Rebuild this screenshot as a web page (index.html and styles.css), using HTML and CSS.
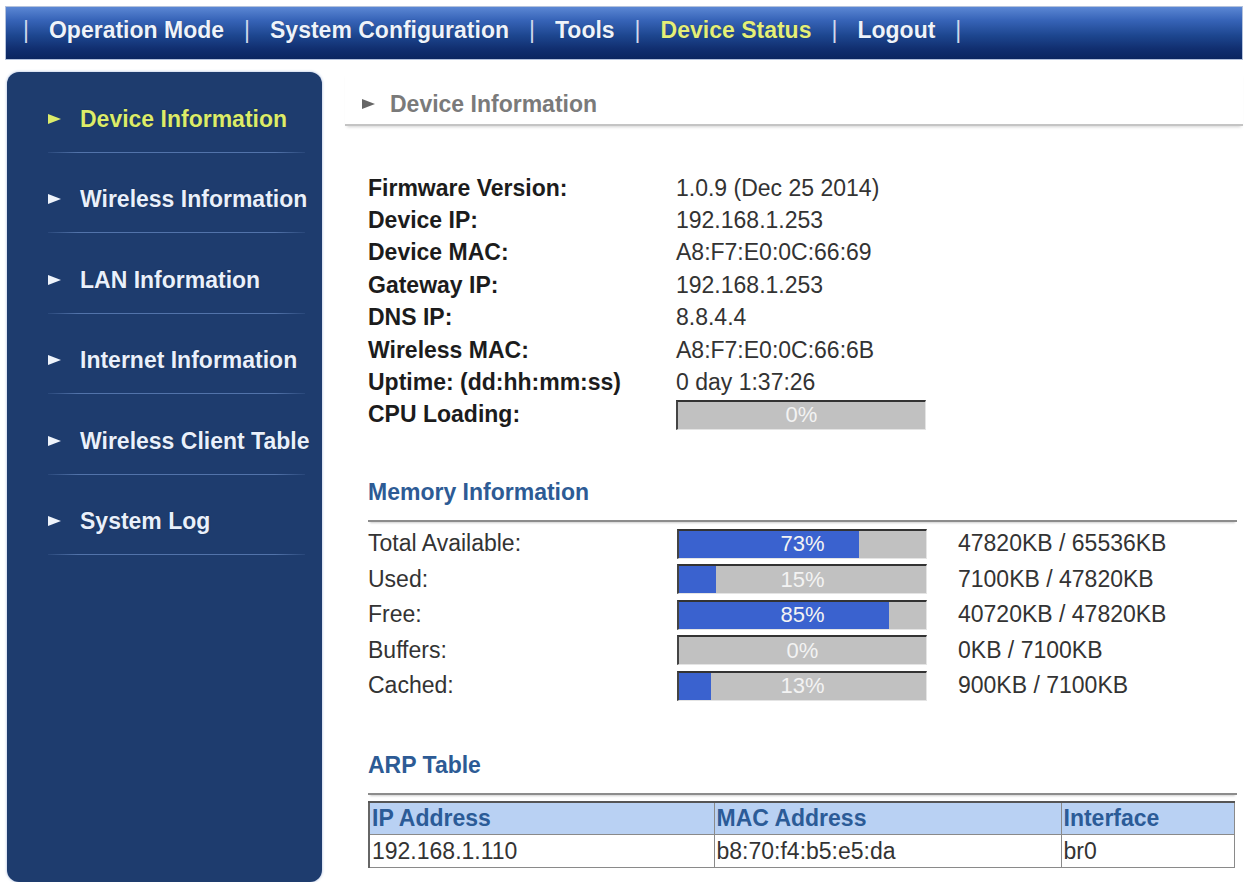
FILE: index.html
```html
<!DOCTYPE html>
<html lang="en">
<head>
  <meta charset="UTF-8" />
  <meta name="viewport" content="width=device-width, initial-scale=1.0">
  <title>Device Status</title>
  <link rel="stylesheet" href="styles.css">
</head>
<body>

  <!-- top menu -->
  <div class="topnav">
    <span class="sep">|</span>
    <a href="#">Operation Mode</a>
    <span class="sep">|</span>
    <a href="#">System Configuration</a>
    <span class="sep">|</span>
    <a href="#">Tools</a>
    <span class="sep">|</span>
    <a href="#" class="current">Device Status</a>
    <span class="sep">|</span>
    <a href="#">Logout</a>
    <span class="sep">|</span>
  </div>

  <div class="main">
    <div class="sidebar">
      <a href="#" class="menu-item active"><span class="arrow"></span>Device Information</a>
      <a href="#" class="menu-item"><span class="arrow"></span>Wireless Information</a>
      <a href="#" class="menu-item"><span class="arrow"></span>LAN Information</a>
      <a href="#" class="menu-item"><span class="arrow"></span>Internet Information</a>
      <a href="#" class="menu-item"><span class="arrow"></span>Wireless Client Table</a>
      <a href="#" class="menu-item"><span class="arrow"></span>System Log</a>
    </div>

    <div class="content">
      <div class="page-title"><span class="arrow"></span>Device Information</div>

      <div class="info-grid">
        <div class="label">Firmware Version:</div><div class="value">1.0.9 (Dec 25 2014)</div>
        <div class="label">Device IP:</div><div class="value">192.168.1.253</div>
        <div class="label">Device MAC:</div><div class="value">A8:F7:E0:0C:66:69</div>
        <div class="label">Gateway IP:</div><div class="value">192.168.1.253</div>
        <div class="label">DNS IP:</div><div class="value">8.8.4.4</div>
        <div class="label">Wireless MAC:</div><div class="value">A8:F7:E0:0C:66:6B</div>
        <div class="label">Uptime: (dd:hh:mm:ss)</div><div class="value">0 day 1:37:26</div>
        <div class="label">CPU Loading:</div>
        <div class="value"><div class="bar" style="--p: 0%">0%</div></div>
      </div>

      <div class="section-title">Memory Information</div>
      <div class="mem-grid">
        <div class="mem-label">Total Available:</div>
        <div class="bar" style="--p: 73%">73%</div>
        <div class="mem-value">47820KB / 65536KB</div>

        <div class="mem-label">Used:</div>
        <div class="bar" style="--p: 15%">15%</div>
        <div class="mem-value">7100KB / 47820KB</div>

        <div class="mem-label">Free:</div>
        <div class="bar" style="--p: 85%">85%</div>
        <div class="mem-value">40720KB / 47820KB</div>

        <div class="mem-label">Buffers:</div>
        <div class="bar" style="--p: 0%">0%</div>
        <div class="mem-value">0KB / 7100KB</div>

        <div class="mem-label">Cached:</div>
        <div class="bar" style="--p: 13%">13%</div>
        <div class="mem-value">900KB / 7100KB</div>
      </div>

      <div class="section-title">ARP Table</div>
      <table class="arp">
        <tr>
          <th class="col-ip">IP Address</th>
          <th class="col-mac">MAC Address</th>
          <th>Interface</th>
        </tr>
        <tr>
          <td>192.168.1.110</td>
          <td>b8:70:f4:b5:e5:da</td>
          <td>br0</td>
        </tr>
      </table>
    </div>
  </div>

</body>
</html>
```

FILE: styles.css
```css
* {
  box-sizing: border-box;
}

body {
  margin: 0;
  font-family: "Liberation Sans", Arial, sans-serif;
  font-size: 23px;
  color: #222;
  background: #fff;
  overflow: hidden;
}

a {
  text-decoration: none;
}

/* top menu bar */
.topnav {
  display: flex;
  align-items: center;
  height: 54px;
  margin: 6px 5px 0 5px;
  padding: 0 0 5px 17px;
  border: 1px solid #b4c2dc;
  background: linear-gradient(to bottom, #5b87d4 0%, #3764b8 25%, #1d468f 55%, #112f70 80%, #0b2660 100%);
}

.topnav a {
  color: #eef3fb;
  font-weight: bold;
  text-shadow: 0 0 1px rgba(0, 0, 0, 0.4);
}

.topnav a.current {
  color: #e4ef78;
}

.topnav .sep {
  color: #cfd9ec;
  margin: 0 20px;
}

.topnav .sep:first-child {
  margin-left: 0;
}

.main {
  display: flex;
  margin-top: 12px;
}

/* left menu */
.sidebar {
  width: 315px;
  height: 810px;
  margin-left: 7px;
  padding-right: 17px;
  background: #1e3c6e;
  border-radius: 12px;
  box-shadow: 0 0 3px #9fb4da;
}

.menu-item {
  display: flex;
  align-items: center;
  margin-left: 41px;
  padding-top: 31.5px;
  padding-bottom: 18px;
  line-height: 30px;
  color: #e9f0fc;
  font-weight: bold;
  white-space: nowrap;
  border-bottom: 1px solid;
  border-image: linear-gradient(to right, rgba(80, 112, 165, 0.2), #5273aa 12%, #5273aa 88%, rgba(80, 112, 165, 0.2)) 1;
  text-shadow: 0 0 1px rgba(0, 0, 0, 0.5);
}

.menu-item.active {
  color: #dcec6a;
}

.menu-item .arrow {
  width: 0;
  height: 0;
  margin-right: 19px;
  border-left: 13px solid #eef3fb;
  border-top: 5.5px solid transparent;
  border-bottom: 5.5px solid transparent;
}

.menu-item.active .arrow {
  border-left-color: #dcec6a;
}

/* right side */
.content {
  flex: 1;
  margin-left: 23px;
  margin-right: 5px;
}

.page-title {
  display: flex;
  align-items: center;
  padding: 18px 0 6px 17px;
  line-height: 28px;
  color: #7a7a7a;
  font-weight: bold;
  border-bottom: 2px solid #c4c4c4;
  box-shadow: 0 3px 3px -2px rgba(0, 0, 0, 0.18);
}

.page-title .arrow {
  width: 0;
  height: 0;
  margin-right: 15px;
  border-left: 13px solid #666;
  border-top: 5.5px solid transparent;
  border-bottom: 5.5px solid transparent;
}

.info-grid {
  display: grid;
  grid-template-columns: 308px 1fr;
  grid-auto-rows: 32.4px;
  align-items: center;
  margin: 46px 0 0 23px;
}

.info-grid .label {
  font-weight: bold;
  color: #1c1c1c;
}

.info-grid .value {
  color: #333;
}

.bar {
  display: flex;
  align-items: center;
  justify-content: center;
  width: 250px;
  height: 30px;
  font-size: 22px;
  color: #f3f3f3;
  border-top: 2px solid #333;
  border-left: 2px solid #444;
  border-right: 1px solid #e4e4e4;
  border-bottom: 1px solid #e4e4e4;
  background: linear-gradient(to right, #3a62cf var(--p), #c1c1c1 var(--p));
}

.section-title {
  margin: 46px 6px 0 23px;
  padding-bottom: 13px;
  line-height: 30px;
  color: #2d5b95;
  font-weight: bold;
  border-bottom: 2px solid #8c8c8c;
  box-shadow: 0 3px 2px -2px rgba(0, 0, 0, 0.2);
}

.mem-grid {
  display: grid;
  grid-template-columns: 309px 250px auto;
  grid-auto-rows: 35.5px;
  align-items: center;
  margin: 4px 0 0 23px;
  color: #333;
}

.mem-value {
  margin-left: 31px;
}

/* arp table */
.arp {
  width: 867px;
  margin: 6px 0 0 23px;
  border-collapse: collapse;
  border-top: 2px solid #555;
  border-left: 2px solid #666;
}

.arp th,
.arp td {
  height: 33px;
  padding: 0 2px;
  text-align: left;
  border: 1px solid #8a8a8a;
}

.arp th {
  background: #b9d1f3;
  color: #2b5b97;
}

.arp td {
  color: #333;
}

.arp .col-ip {
  width: 345px;
}

.arp .col-mac {
  width: 347px;
}
```
